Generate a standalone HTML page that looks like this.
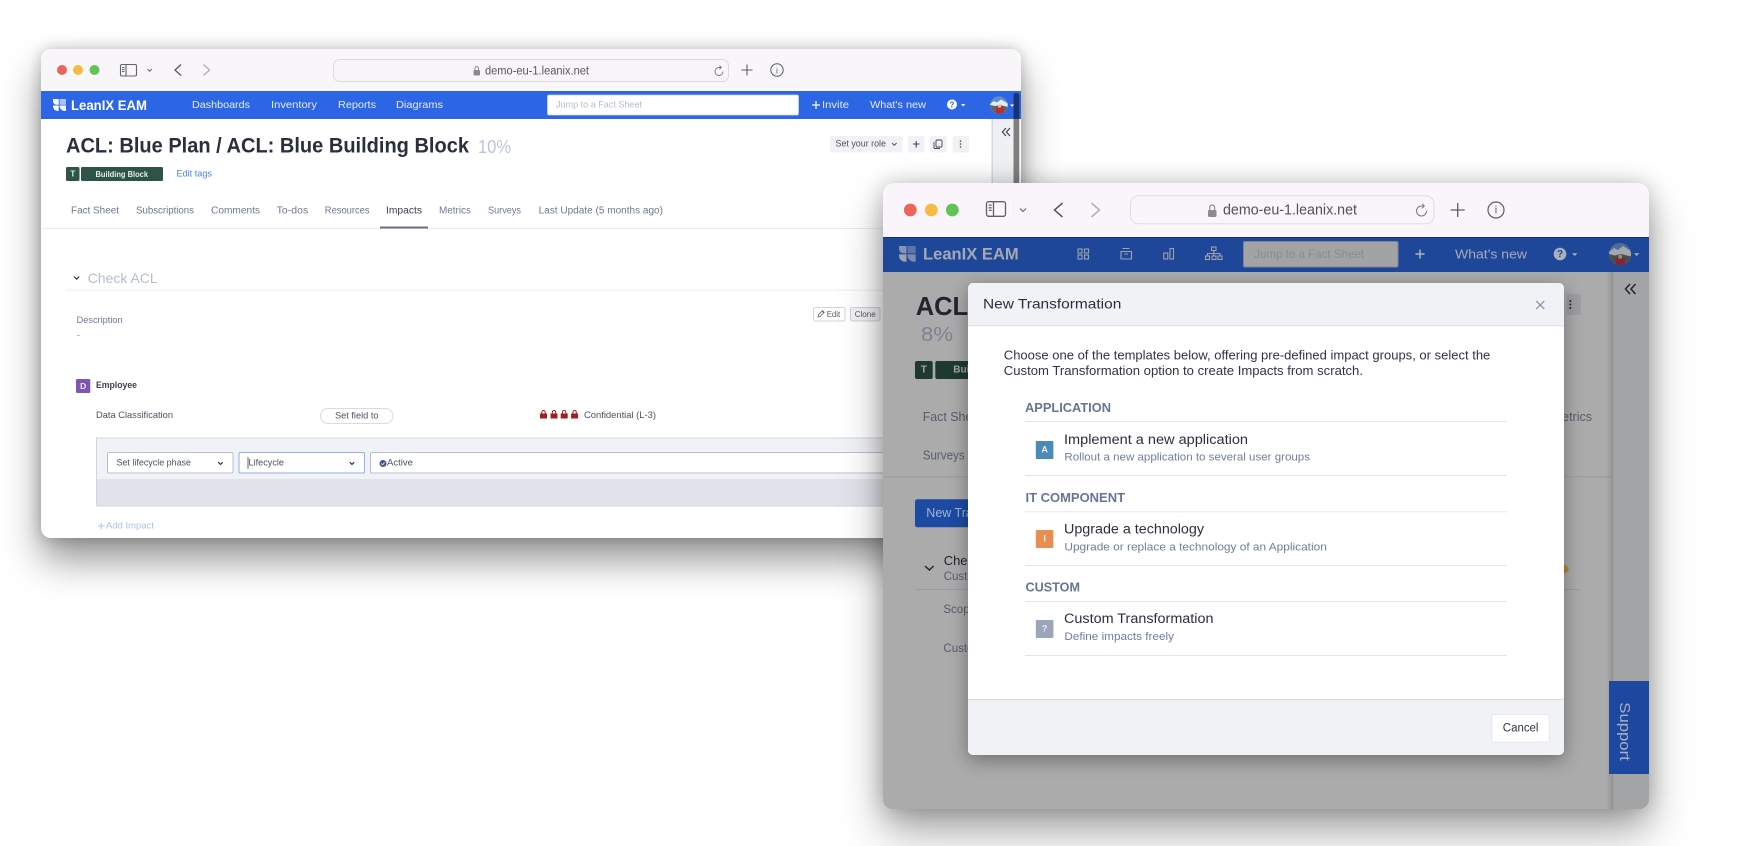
<!DOCTYPE html>
<html lang="en"><head><meta charset="utf-8"><title>LeanIX EAM</title>
<style>
html,body{margin:0;padding:0;background:#fff;width:1744px;height:846px;overflow:hidden}
.w{position:absolute;overflow:hidden}
.w svg{position:absolute;display:block}
text{font-family:"Liberation Sans",sans-serif;dominant-baseline:central}
#w1{left:41px;top:49px;width:980px;height:489px;border-radius:10px;background:#fff;box-shadow:0 22px 38px rgba(0,0,0,.42),0 0 14px rgba(0,0,0,.22);}
#w1 svg{left:-41px;top:-49px;filter:blur(.35px)}
#w2{left:883px;top:183px;width:766px;height:626px;border-radius:10px;background:#ababab;box-shadow:0 22px 42px rgba(0,0,0,.36),0 0 22px rgba(0,0,0,.2)}
#w2 svg{left:-883px;top:-183px}
#m{left:968px;top:283px;width:596px;height:472px;border-radius:5px;background:#fff;box-shadow:0 5px 18px rgba(0,0,0,.35)}
#m svg{left:-968px;top:-283px}
</style></head><body>

<div class="w" id="w1"><svg width="1744" height="846" viewBox="0 0 1744 846">
<rect x="41" y="49" width="980" height="42" fill="#f9f6f9"/>
<circle cx="62" cy="70" r="5" fill="#ec6559"/><circle cx="78" cy="70" r="5" fill="#f6bb44"/><circle cx="94.500" cy="70" r="5" fill="#61c454"/>
<g fill="none" stroke="#62646a" stroke-width="1.100"><rect x="120.500" y="64.500" width="16" height="11.500" rx="1.500"/><path d="M126 64.500V76M122 67.500h2.500M122 69.500h2.500M122 71.500h2.500"/></g>
<path d="M147.500 69l2.200 2.200 2.200-2.200" fill="none" stroke="#6f7075" stroke-width="1.100"/>
<path d="M181 64.500l-6 5.500 6 5.500" fill="none" stroke="#55565c" stroke-width="1.300"/>
<path d="M203.500 64.500l6 5.500-6 5.500" fill="none" stroke="#aeaeb2" stroke-width="1.300"/>
<rect x="333.500" y="59.500" width="395" height="22" rx="6" fill="#f8f5f8" stroke="#dedbe0"/>
<rect x="473.500" y="70" width="6.500" height="5.500" rx="1" fill="#8a8a8f"/><path d="M475 70v-2a1.800 1.800 0 013.500 0v2" fill="none" stroke="#8a8a8f"/>
<text x="485" y="71.500" textLength="104" lengthAdjust="spacingAndGlyphs" font-size="11.500" fill="#56575c">demo-eu-1.leanix.net</text>
<path d="M723 71.500a4 4 0 11-4-4h2m-1.500-1.800l1.800 1.800-1.800 1.800" fill="none" stroke="#77787c" stroke-width=".9"/>
<path d="M747 64.500v11M741.500 70h11" stroke="#5c5d62" stroke-width="1.100"/>
<circle cx="777" cy="70" r="6.200" fill="none" stroke="#5c5d62" stroke-width="1"/>
<text x="777" y="70.500" text-anchor="middle" font-size="8.500" font-family="Liberation Serif" fill="#5c5d62">i</text>

<rect x="41" y="91" width="980" height="28" fill="#2d66e5"/>
<g fill="#fff"><path d="M53 99h5.700v5.800H56.500A3.500 3.500 0 0153 101.300z" opacity=".95"/><path d="M59.500 99H66v5.800h-6.500z" opacity=".6"/><path d="M53 105.500h5.700V111h-1A4.700 4.700 0 0153 106.300z"/><path d="M59.500 105.500H66V111h-1a5.500 5.500 0 01-5.500-5.500z" opacity=".95"/></g>
<text x="71" y="105" textLength="76" lengthAdjust="spacingAndGlyphs" font-size="14" font-weight="700" fill="#fff">LeanIX EAM</text>
<g font-size="10.500" fill="#e6edfc">
<text x="192" y="105" textLength="58" lengthAdjust="spacingAndGlyphs">Dashboards</text>
<text x="271" y="105" textLength="46" lengthAdjust="spacingAndGlyphs">Inventory</text>
<text x="338" y="105" textLength="38" lengthAdjust="spacingAndGlyphs">Reports</text>
<text x="396" y="105" textLength="47" lengthAdjust="spacingAndGlyphs">Diagrams</text>
<path d="M812 105h8M816 101v8" stroke="#fff" stroke-width="1.200"/>
<text x="822" y="105" textLength="27" lengthAdjust="spacingAndGlyphs">Invite</text>
<text x="870" y="105" textLength="56" lengthAdjust="spacingAndGlyphs">What's new</text></g>
<rect x="547.500" y="95" width="251" height="20" rx="1.500" fill="#fff" stroke="#c8d4ef" stroke-width=".8"/>
<text x="556" y="105" textLength="86" lengthAdjust="spacingAndGlyphs" font-size="9.500" fill="#b6bccb">Jump to a Fact Sheet</text>
<circle cx="952" cy="104.500" r="5" fill="#fff"/><text x="952" y="104.800" text-anchor="middle" font-size="8" font-weight="700" fill="#2d66e5">?</text>
<path d="M961 104h4.400l-2.200 2.400z" fill="#fff"/>
<defs><clipPath id="c1"><circle cx="999" cy="105" r="8.700"/></clipPath><clipPath id="c2"><circle cx="1620" cy="254" r="11"/></clipPath></defs>
<g clip-path="url(#c1)"><rect x="990" y="96" width="18" height="18" fill="#5d8ecb"/><path d="M990 104l4-3 3 1.500 4-3 7 4v10h-18z" fill="#e6ebf0"/><path d="M990 105l5 1 5-1 8 2v7h-18z" fill="#5f6468"/><rect x="996" y="107" width="8" height="7" fill="#bb2f2a"/><rect x="998" y="104.500" width="3" height="3" fill="#d9c4b5"/></g>
<path d="M1010 104.500h4.400l-2.200 2.400z" fill="#fff"/>

<rect x="992.500" y="119" width="21" height="70" fill="#eef0f4"/>
<rect x="991.500" y="119" width="1.500" height="70" fill="#d5d8de"/>
<path d="M1006 128l-3.600 4 3.600 4M1010 128l-3.600 4 3.600 4" fill="none" stroke="#3c4152" stroke-width="1.200"/>
<rect x="1013.500" y="93" width="5.800" height="100" rx="2.500" fill="#000" opacity=".5"/>

<text x="66" y="146" textLength="403" lengthAdjust="spacingAndGlyphs" font-size="21" font-weight="700" fill="#2a2f3e">ACL: Blue Plan / ACL: Blue Building Block</text>
<text x="478" y="147" textLength="33" lengthAdjust="spacingAndGlyphs" font-size="18" fill="#bcc5d5">10%</text>
<rect x="66" y="167" width="13.500" height="14" rx="1.500" fill="#2d5446"/><rect x="81" y="167" width="82" height="14" rx="1.500" fill="#2d5446"/>
<text x="72.800" y="174" text-anchor="middle" font-size="8" font-weight="700" fill="#e8edeb">T</text>
<text x="95.500" y="174" textLength="52.500" lengthAdjust="spacingAndGlyphs" font-size="8.500" font-weight="700" fill="#e8edeb">Building Block</text>
<text x="176.500" y="174" textLength="35.500" lengthAdjust="spacingAndGlyphs" font-size="9.500" fill="#4d80ee">Edit tags</text>

<rect x="830" y="136" width="72.500" height="16.500" rx="2" fill="#f1f2f5"/>
<text x="835.500" y="144" textLength="50.500" lengthAdjust="spacingAndGlyphs" font-size="9.500" fill="#4a5163">Set your role</text>
<path d="M892 143l2.300 2.300 2.300-2.300" fill="none" stroke="#4a5163"/>
<rect x="908" y="136" width="16.500" height="16.500" rx="2" fill="#f1f2f5"/><path d="M913 144h6.500M916.200 141v6.500" stroke="#3f4556" stroke-width="1.100"/>
<rect x="930" y="136" width="16.500" height="16.500" rx="2" fill="#f1f2f5"/><g fill="none" stroke="#3f4556" stroke-width=".9"><rect x="936" y="140" width="6" height="7" rx="1"/><path d="M934 142v5.500a1 1 0 001 1h5"/></g>
<rect x="952.500" y="136" width="16.500" height="16.500" rx="2" fill="#f1f2f5"/><g fill="#3f4556"><circle cx="960.500" cy="141" r=".8"/><circle cx="960.500" cy="144" r=".8"/><circle cx="960.500" cy="147" r=".8"/></g>

<g font-size="10" fill="#6b7894">
<text x="71" y="211" textLength="48" lengthAdjust="spacingAndGlyphs">Fact Sheet</text>
<text x="136" y="211" textLength="58" lengthAdjust="spacingAndGlyphs">Subscriptions</text>
<text x="211" y="211" textLength="49" lengthAdjust="spacingAndGlyphs">Comments</text>
<text x="276.700" y="211" textLength="31.500" lengthAdjust="spacingAndGlyphs">To-dos</text>
<text x="324.800" y="211" textLength="44.800" lengthAdjust="spacingAndGlyphs">Resources</text>
<text x="386" y="211" textLength="36" lengthAdjust="spacingAndGlyphs" fill="#3b4251">Impacts</text>
<text x="439" y="211" textLength="32" lengthAdjust="spacingAndGlyphs">Metrics</text>
<text x="488" y="211" textLength="33" lengthAdjust="spacingAndGlyphs">Surveys</text>
<text x="538.600" y="211" textLength="124.400" lengthAdjust="spacingAndGlyphs">Last Update (5 months ago)</text></g>
<rect x="41" y="228" width="980" height="1" fill="#e8ebf0"/>
<rect x="380" y="226.500" width="48" height="2" fill="#6a7081"/>

<path d="M74 276.500l2.600 2.600 2.600-2.600" fill="none" stroke="#2f3444" stroke-width="1.200"/>
<text x="87.700" y="278" textLength="70" lengthAdjust="spacingAndGlyphs" font-size="14" fill="#b4bdcd">Check ACL</text>
<rect x="66" y="289.500" width="830" height="1.200" fill="#eceff4"/>
<text x="76.600" y="320.500" textLength="46" lengthAdjust="spacingAndGlyphs" font-size="9.500" fill="#6b7894">Description</text>
<text x="76.800" y="336" font-size="10" fill="#8d98b0">-</text>
<rect x="813.500" y="307.500" width="31.500" height="13.500" rx="2" fill="#fff" stroke="#d2d4d9"/>
<path d="M818 317l.6-2.400 4-4 1.700 1.700-4 4zM822 311.200l1.700 1.700" fill="none" stroke="#555a68" stroke-width=".7"/>
<text x="826.700" y="314" textLength="13.500" lengthAdjust="spacingAndGlyphs" font-size="8.500" fill="#555a68">Edit</text>
<rect x="850.500" y="307.500" width="29.500" height="13.500" rx="2" fill="#f2f2f4" stroke="#cfd1d6"/>
<text x="854.700" y="314" textLength="21" lengthAdjust="spacingAndGlyphs" font-size="8.500" fill="#555a68">Clone</text>

<rect x="76" y="379" width="14.300" height="14" rx="1.500" fill="#7d56b3"/>
<text x="83.200" y="386" text-anchor="middle" font-size="8.500" font-weight="700" fill="#f0e9f8">D</text>
<text x="96" y="385.500" textLength="41" lengthAdjust="spacingAndGlyphs" font-size="9.500" font-weight="700" fill="#3a4050">Employee</text>
<text x="96" y="415.500" textLength="77" lengthAdjust="spacingAndGlyphs" font-size="9.500" fill="#4a5163">Data Classification</text>
<rect x="320.500" y="408.500" width="72.500" height="15" rx="7.500" fill="#fff" stroke="#d5dae3"/>
<text x="335" y="416" textLength="43.500" lengthAdjust="spacingAndGlyphs" font-size="9.500" fill="#4a5163">Set field to</text>
<g fill="#a31d1d"><path d="M540 413.500h7v5h-7zM541.300 413.500v-1.300a2.200 2.200 0 014.400 0v1.300h-1v-1.300a1.200 1.200 0 00-2.400 0v1.300z"/><path d="M550.500 413.500h7v5h-7zM551.800 413.500v-1.300a2.200 2.200 0 014.400 0v1.300h-1v-1.300a1.200 1.200 0 00-2.400 0v1.300z"/><path d="M560.700 413.500h7v5h-7zM562 413.500v-1.300a2.200 2.200 0 014.400 0v1.300h-1v-1.300a1.200 1.200 0 00-2.400 0v1.300z"/><path d="M571.100 413.500h7v5h-7zM572.400 413.500v-1.300a2.200 2.200 0 014.400 0v1.300h-1v-1.300a1.200 1.200 0 00-2.400 0v1.300z"/></g>
<text x="584" y="415.500" textLength="72" lengthAdjust="spacingAndGlyphs" font-size="9.500" fill="#4a5163">Confidential (L-3)</text>

<rect x="96.500" y="438" width="800" height="41" fill="#f0f2f6"/>
<rect x="96.500" y="479" width="800" height="27" fill="#e0e3e9"/>
<path d="M96.500 506V438H900M96.500 506H900" fill="none" stroke="#cfd5df"/>
<rect x="107.500" y="452.500" width="125.500" height="20.500" rx="1.500" fill="#fff" stroke="#b8c0cf"/>
<text x="116.500" y="463" textLength="74.500" lengthAdjust="spacingAndGlyphs" font-size="9.500" fill="#4a5163">Set lifecycle phase</text>
<path d="M218.300 462.200l2.200 2.200 2.200-2.200" fill="none" stroke="#2f3444" stroke-width="1.200"/>
<rect x="239" y="452.500" width="125.500" height="20.500" rx="1.500" fill="#fff" stroke="#8fb0ea"/>
<rect x="247.600" y="457" width=".8" height="12" fill="#3b4251"/>
<text x="248.500" y="463" textLength="35.500" lengthAdjust="spacingAndGlyphs" font-size="9.500" fill="#4a5163">Lifecycle</text>
<path d="M349.800 462.200l2.200 2.200 2.200-2.200" fill="none" stroke="#2f3444" stroke-width="1.200"/>
<rect x="370.500" y="452.500" width="560" height="20.500" rx="1.500" fill="#fff" stroke="#b8c0cf"/>
<circle cx="383" cy="463.500" r="3.500" fill="#3b5b8f"/><path d="M381.300 463.500l1.200 1.200 2.200-2.200" fill="none" stroke="#fff" stroke-width=".8"/>
<text x="387" y="463" textLength="26" lengthAdjust="spacingAndGlyphs" font-size="9.500" fill="#4a5163">Active</text>
<path d="M98 526h6.500M101.200 522.800v6.500" stroke="#a9c1f5" stroke-width="1"/>
<text x="106" y="526" textLength="48" lengthAdjust="spacingAndGlyphs" font-size="9.500" fill="#a9c1f5">Add Impact</text>
</svg></div>

<div class="w" id="w2"><svg width="1744" height="846" viewBox="0 0 1744 846">
<defs><clipPath id="c3"><circle cx="1620" cy="254" r="11"/></clipPath></defs>
<rect x="883" y="183" width="766" height="54.500" fill="#f9f5fb"/>
<circle cx="910.300" cy="210" r="6.400" fill="#ec6559"/><circle cx="931.300" cy="210" r="6.400" fill="#f6bb44"/><circle cx="952.300" cy="210" r="6.400" fill="#61c454"/>
<g fill="none" stroke="#606167" stroke-width="1.300"><rect x="986.500" y="201.700" width="19" height="14.600" rx="2"/><path d="M993.500 201.700v14.600M988.800 205.200h2.800M988.800 207.800h2.800M988.800 210.400h2.800"/></g>
<rect x="1013.500" y="200" width=".6" height="20" fill="#eeebf0"/>
<path d="M1020 208.500l3 3 3-3" fill="none" stroke="#7a7b80" stroke-width="1.300"/>
<path d="M1062.500 203l-8 7 8 7" fill="none" stroke="#55565c" stroke-width="1.500"/>
<path d="M1091.500 203l8 7-8 7" fill="none" stroke="#b0b0b4" stroke-width="1.500"/>
<rect x="1130.500" y="195.800" width="303.500" height="28" rx="8" fill="#f9f5fb" stroke="#dfdbe2"/>
<rect x="1208" y="210" width="8.500" height="7" rx="1.200" fill="#8c8c90"/><path d="M1209.800 210v-2.600a2.400 2.400 0 014.800 0v2.600" fill="none" stroke="#8c8c90" stroke-width="1.200"/>
<text x="1223" y="210.600" textLength="134" lengthAdjust="spacingAndGlyphs" font-size="14.500" fill="#505156">demo-eu-1.leanix.net</text>
<path d="M1426.500 211a5 5 0 11-5-5h2.500m-2-2.300l2.300 2.300-2.300 2.300" fill="none" stroke="#77787c" stroke-width="1"/>
<path d="M1457.700 203v14M1450.700 210h14" stroke="#5c5d62" stroke-width="1.300"/>
<circle cx="1496" cy="210" r="8" fill="none" stroke="#5c5d62" stroke-width="1.200"/>
<text x="1496" y="210.500" text-anchor="middle" font-size="11" font-family="Liberation Serif" fill="#5c5d62">i</text>

<rect x="883" y="237" width="766" height="35" fill="#1e4799"/>
<rect x="883" y="237" width="766" height="1" fill="#123276"/>
<g fill="#9aa2b4"><path d="M899 246h7.500v7.400h-3A4.500 4.500 0 01899 249z" opacity=".85"/><path d="M907.500 246h8.200v7.400h-8.200z" opacity=".5"/><path d="M899 254.400h7.500v7.300h-1.500A6 6 0 01899 255.500z"/><path d="M907.500 254.400h8.200v7.300h-1.500a6.700 6.700 0 01-6.700-6.700z" opacity=".75"/></g>
<text x="923" y="254" textLength="95.700" lengthAdjust="spacingAndGlyphs" font-size="17" font-weight="700" fill="#a4a9b2">LeanIX EAM</text>
<g fill="none" stroke="#9ea3ae" stroke-width="1.100">
<rect x="1078" y="249" width="4" height="4"/><rect x="1084.500" y="249" width="4" height="4"/><rect x="1078" y="255" width="4" height="4"/><rect x="1084.500" y="255" width="4" height="4"/>
<path d="M1122.500 248.500h7M1121 251.500h10.500v7.500H1121zM1124.500 254h3.500"/>
<rect x="1163.800" y="253" width="4" height="6"/><rect x="1170" y="248.500" width="3.500" height="10.500"/>
<rect x="1211.500" y="247" width="4.500" height="3.500"/><rect x="1205.500" y="256" width="4" height="3.500"/><rect x="1212" y="256" width="4" height="3.500"/><rect x="1218" y="256" width="4" height="3.500"/><path d="M1213.800 250.500v5.500M1207.500 256v-2.500h12.500v2.500"/></g>
<rect x="1243.500" y="241.500" width="154.500" height="25.500" rx="1.500" fill="#a3a3a5" stroke="#7d8392"/>
<text x="1254.300" y="254" textLength="109.700" lengthAdjust="spacingAndGlyphs" font-size="12" fill="#898c93">Jump to a Fact Sheet</text>
<path d="M1415.500 254h9M1420 249.500v9" stroke="#aeb3bd" stroke-width="1.500"/>
<text x="1455" y="254" textLength="72" lengthAdjust="spacingAndGlyphs" font-size="13" fill="#a5abba">What's new</text>
<circle cx="1560" cy="254" r="6.300" fill="#abb0bb"/><text x="1560" y="254.300" text-anchor="middle" font-size="10" font-weight="700" fill="#1e4799">?</text>
<path d="M1572 253.200h5.400l-2.700 2.800z" fill="#abb0bb"/>
<g clip-path="url(#c3)"><rect x="1609" y="243" width="22" height="22" fill="#4a6d9a"/><path d="M1609 252l5-4 4 2 5-4 8 5v16h-22z" fill="#a4a7ab"/><path d="M1609 254l6 1.500 6-1.500 10 2.500v9h-22z" fill="#4a4d50"/><rect x="1616" y="258" width="9" height="8" fill="#86252a"/><rect x="1618.500" y="255" width="3.500" height="3.500" fill="#9c8d84"/></g>
<path d="M1634 253.200h5.400l-2.700 2.800z" fill="#abb0bb"/>

<rect x="883" y="272" width="766" height="537" fill="#ababab"/>
<text x="915.700" y="307" font-size="25.500" font-weight="700" fill="#22252f">ACL</text>
<text x="921" y="335" textLength="32" lengthAdjust="spacingAndGlyphs" font-size="20" fill="#7d8291">8%</text>
<rect x="915" y="361" width="17.700" height="18" rx="2" fill="#1e3a30"/><rect x="935.300" y="361" width="60" height="18" rx="2" fill="#1e3a30"/>
<text x="923.800" y="370" text-anchor="middle" font-size="10" font-weight="700" fill="#a5a8a8">T</text>
<text x="953.300" y="370" font-size="10" font-weight="700" fill="#a5a8a8">Bui</text>
<text x="922.700" y="416.700" font-size="13" fill="#555d6f" textLength="60" lengthAdjust="spacingAndGlyphs">Fact Sheet</text>
<text x="922.700" y="455" font-size="13" fill="#555d6f" textLength="42" lengthAdjust="spacingAndGlyphs">Surveys</text>
<text x="1592" y="417" text-anchor="end" font-size="12.500" fill="#555d6f">Metrics</text>
<rect x="883" y="476.300" width="730" height="1" fill="#9a9ca5"/>
<rect x="915" y="499.300" width="100" height="28" rx="2.500" fill="#1d4aa2"/>
<text x="926.300" y="513" font-size="12.500" fill="#a4b3d3">New Transformation</text>
<path d="M925 566l4.300 4 4.300-4" fill="none" stroke="#22252f" stroke-width="1.400"/>
<text x="943.700" y="560.700" font-size="13" fill="#22252f">Check</text>
<text x="943.700" y="577" font-size="11.500" fill="#555d6f">Custom</text>
<rect x="915" y="589" width="666" height="1" fill="#9a9ca5"/>
<text x="943.400" y="610" font-size="11.500" fill="#555d6f">Scope</text>
<text x="943.400" y="649" font-size="11.500" fill="#555d6f">Custom</text>
<circle cx="1564" cy="569" r="4.500" fill="#b08a36"/>
<rect x="1567" y="294" width="14" height="21" rx="2" fill="#9d9ea2"/><g fill="#22252f"><circle cx="1570.300" cy="301" r="1"/><circle cx="1570.300" cy="304.500" r="1"/><circle cx="1570.300" cy="308" r="1"/></g>
<defs><linearGradient id="sd" x1="0" x2="1"><stop offset="0" stop-color="#000" stop-opacity="0"/><stop offset="1" stop-color="#000" stop-opacity=".14"/></linearGradient></defs>
<rect x="1606" y="272" width="7" height="537" fill="url(#sd)"/>
<rect x="1612.700" y="272" width="36.300" height="537" fill="#a3a4a6"/>
<rect x="1612.200" y="272" width="1" height="537" fill="#919296"/>
<path d="M1630 284l-4.500 5 4.500 5M1635.500 284l-4.500 5 4.500 5" fill="none" stroke="#22252f" stroke-width="1.500"/>
<rect x="1609" y="681" width="40" height="93" fill="#1c48a0"/>
<text transform="translate(1624.500 702.300) rotate(90)" x="0" y="0" textLength="58.500" lengthAdjust="spacingAndGlyphs" font-size="15" fill="#a8b0c4">Support</text>
</svg></div>

<div class="w" id="m"><svg width="1744" height="846" viewBox="0 0 1744 846">
<rect x="968" y="283" width="596" height="43" fill="#f0f2f6"/>
<rect x="968" y="325" width="596" height="1.200" fill="#e0e3e9"/>
<text x="983" y="303.300" textLength="138.300" lengthAdjust="spacingAndGlyphs" font-size="14" fill="#2a2f3e">New Transformation</text>
<path d="M1536.300 301l8 8M1544.300 301l-8 8" stroke="#7f8ba3" stroke-width="1.200"/>
<text x="1003.800" y="355.300" textLength="486.500" lengthAdjust="spacingAndGlyphs" font-size="12.500" fill="#2f3444">Choose one of the templates below, offering pre-defined impact groups, or select the</text>
<text x="1003.800" y="371" textLength="359.200" lengthAdjust="spacingAndGlyphs" font-size="12.500" fill="#2f3444">Custom Transformation option to create Impacts from scratch.</text>

<g font-size="13" font-weight="700" fill="#667596">
<text x="1025" y="407.700" textLength="86" lengthAdjust="spacingAndGlyphs">APPLICATION</text>
<text x="1025.500" y="497.300" textLength="99.500" lengthAdjust="spacingAndGlyphs">IT COMPONENT</text>
<text x="1025.500" y="587" textLength="54.500" lengthAdjust="spacingAndGlyphs">CUSTOM</text></g>
<g fill="#e2e5ea"><rect x="1025" y="421" width="482" height="1"/><rect x="1025" y="475" width="482" height="1"/><rect x="1025" y="511.300" width="482" height="1"/><rect x="1025" y="565" width="482" height="1"/><rect x="1025" y="601" width="482" height="1"/><rect x="1025" y="655" width="482" height="1"/></g>

<rect x="1035.800" y="441" width="17.600" height="18" rx="1" fill="#4a8ab8"/>
<text x="1044.600" y="449.500" text-anchor="middle" font-size="9" font-weight="700" fill="#eaf2f8">A</text>
<text x="1064" y="439.300" textLength="184" lengthAdjust="spacingAndGlyphs" font-size="13.500" fill="#2a2f3e">Implement a new application</text>
<text x="1064.400" y="457.500" textLength="245.600" lengthAdjust="spacingAndGlyphs" font-size="11" fill="#6d7ea0">Rollout a new application to several user groups</text>

<rect x="1035.800" y="530" width="17.600" height="18" rx="1" fill="#e98e52"/>
<text x="1044.600" y="538.500" text-anchor="middle" font-size="9" font-weight="700" fill="#fdf0e6">I</text>
<text x="1064" y="529" textLength="140" lengthAdjust="spacingAndGlyphs" font-size="13.500" fill="#2a2f3e">Upgrade a technology</text>
<text x="1064.400" y="547.500" textLength="262.400" lengthAdjust="spacingAndGlyphs" font-size="11" fill="#6d7ea0">Upgrade or replace a technology of an Application</text>

<rect x="1035.800" y="620" width="17.600" height="18" rx="1" fill="#9ba5bb"/>
<text x="1044.600" y="628.500" text-anchor="middle" font-size="9" font-weight="700" fill="#eef0f4">?</text>
<text x="1064" y="618.700" textLength="149.500" lengthAdjust="spacingAndGlyphs" font-size="13.500" fill="#2a2f3e">Custom Transformation</text>
<text x="1064.400" y="636.800" textLength="109.600" lengthAdjust="spacingAndGlyphs" font-size="11" fill="#6d7ea0">Define impacts freely</text>

<rect x="968" y="699.300" width="596" height="56" fill="#f0f2f6"/>
<rect x="968" y="699" width="596" height="1" fill="#d8dbe1"/>
<rect x="1491.800" y="714.500" width="57.500" height="27.500" rx="2" fill="#fff" stroke="#e6e8ed"/>
<text x="1502.800" y="728.500" textLength="35.700" lengthAdjust="spacingAndGlyphs" font-size="11.500" fill="#2f3444">Cancel</text>
</svg></div>
</body></html>
